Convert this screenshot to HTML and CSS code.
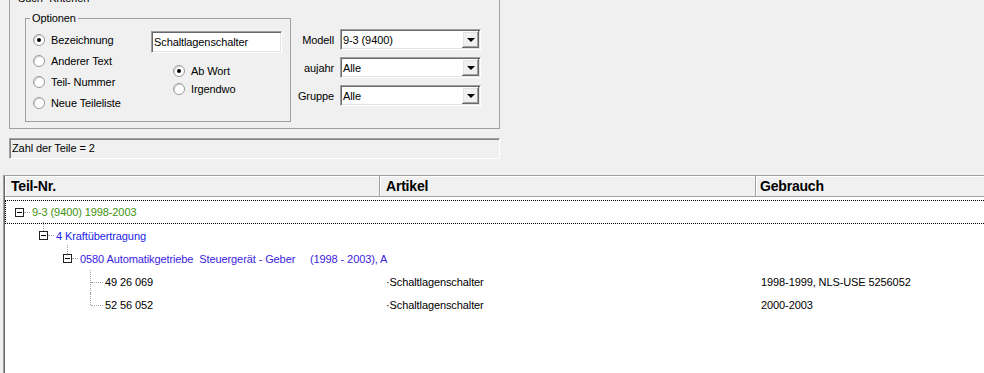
FILE: index.html
```html
<!DOCTYPE html>
<html lang="de">
<head>
    <meta charset="UTF-8">
    <meta name="viewport" content="width=device-width, initial-scale=1.0">
    <title>Teilesuche</title>
    <link rel="stylesheet" href="styles.css">
</head>
<body>

    <fieldset class="searchBox">
        <legend>Such- Kriterien</legend>
        <div class="searchRow">
            <fieldset class="optionBox">
                <legend>Optionen</legend>
                <div class="optionCols">
                    <div class="radioList">
                        <div class="radio"><span class="dot checked"></span>Bezeichnung</div>
                        <div class="radio"><span class="dot"></span>Anderer Text</div>
                        <div class="radio"><span class="dot"></span>Teil- Nummer</div>
                        <div class="radio"><span class="dot"></span>Neue Teileliste</div>
                    </div>
                    <div class="searchCol">
                        <div class="textBox">Schaltlagenschalter</div>
                        <div class="subRadios">
                            <div class="radio"><span class="dot checked"></span>Ab Wort</div>
                            <div class="radio"><span class="dot"></span>Irgendwo</div>
                        </div>
                    </div>
                </div>
            </fieldset>

            <div class="filterGrid">
                <span class="filterLabel">Modell</span>
                <div class="combo"><span>9-3 (9400)</span><span class="comboBtn"></span></div>
                <span class="filterLabel">aujahr</span>
                <div class="combo"><span>Alle</span><span class="comboBtn"></span></div>
                <span class="filterLabel">Gruppe</span>
                <div class="combo"><span>Alle</span><span class="comboBtn"></span></div>
            </div>
        </div>
    </fieldset>

    <div class="statusBox">Zahl der Teile = 2</div>

    <div class="partList">
        <div class="listInner">
            <div class="listHead">
                <div class="headCell">Teil-Nr.</div>
                <div class="headCell">Artikel</div>
                <div class="headCell">Gebrauch</div>
            </div>
            <div class="listBody">
                <div class="listRow first focused">
                    <div class="treeCell level0"><span class="toggle"></span><span class="link"></span><span class="model">9-3 (9400) 1998-2003</span></div>
                    <div class="cell"></div>
                    <div class="cell"></div>
                </div>
                <div class="listRow">
                    <div class="treeCell level1"><span class="toggle child"></span><span class="link"></span><span class="group">4 Kraftübertragung</span></div>
                    <div class="cell"></div>
                    <div class="cell"></div>
                </div>
                <div class="listRow">
                    <div class="treeCell level2"><span class="toggle child"></span><span class="link"></span><span class="subGroup">0580 Automatikgetriebe  Steuergerät - Geber     (1998 - 2003), A</span></div>
                    <div class="cell"></div>
                    <div class="cell"></div>
                </div>
                <div class="listRow">
                    <div class="treeCell leaf"><span class="elbow"></span><span>49 26 069</span></div>
                    <div class="cell">·Schaltlagenschalter</div>
                    <div class="cell usage">1998-1999, NLS-USE 5256052</div>
                </div>
                <div class="listRow">
                    <div class="treeCell leaf"><span class="elbow last"></span><span>52 56 052</span></div>
                    <div class="cell">·Schaltlagenschalter</div>
                    <div class="cell usage">2000-2003</div>
                </div>
            </div>
        </div>
    </div>

</body>
</html>
```

FILE: styles.css
```css
body {
    margin: 0;
    background: #f0f0f0;
    font-family: "Liberation Sans", Arial, sans-serif;
    font-size: 11px;
    letter-spacing: -0.1px;
    color: #000;
    height: 373px;
    overflow: hidden;
}

fieldset {
    box-sizing: border-box;
    border: 1px solid #a0a0a0;
    margin: 0;
    min-width: 0;
}
legend {
    padding: 0 2px;
    line-height: 13px;
}

/* Such-Kriterien */
.searchBox {
    width: 491px;
    height: 137px;
    margin: -8px 0 0 9px;
    padding: 7px 6px 5px 15px;
}
.searchBox > legend {
    margin-left: -9px;
}
.searchRow {
    display: flex;
    align-items: flex-start;
}

.optionBox {
    width: 266px;
    height: 110px;
    padding: 4px 7px 0 7px;
}
.optionBox > legend {
    margin-left: -3px;
}
.optionCols {
    display: flex;
}
.radioList {
    width: 118px;
    display: flex;
    flex-direction: column;
}
.radio {
    height: 21px;
    display: flex;
    align-items: center;
    gap: 6px;
    white-space: nowrap;
}
.dot {
    width: 12px;
    height: 12px;
    box-sizing: border-box;
    border-radius: 50%;
    background: #fff;
    border: 1px solid #9a9a9a;
    box-shadow: inset 1px 1px 0 #d4d4d4;
    display: flex;
    align-items: center;
    justify-content: center;
}
.dot.checked::after {
    content: "";
    width: 4px;
    height: 4px;
    border-radius: 50%;
    background: #000;
}

.searchCol {
    display: flex;
    flex-direction: column;
}
.textBox,
.combo {
    box-sizing: border-box;
    background: #fff;
    border: 1px solid;
    border-color: #a0a0a0 #fff #fff #a0a0a0;
    box-shadow: inset 1px 1px 0 #696969, inset -1px -1px 0 #e3e3e3;
}
.textBox {
    width: 131px;
    height: 22px;
    margin-top: 2px;
    padding-left: 2px;
    line-height: 20px;
}
.subRadios {
    margin: 9px 0 0 22px;
}
.subRadios .radio {
    height: 18px;
}

.filterGrid {
    display: grid;
    grid-template-columns: 40px 141px;
    column-gap: 6px;
    row-gap: 7px;
    align-items: center;
    margin: 17px 0 0 3px;
}
.filterLabel {
    text-align: right;
}
.combo {
    height: 21px;
    padding-left: 2px;
    display: flex;
    align-items: center;
    justify-content: space-between;
}
.comboBtn {
    width: 17px;
    height: 17px;
    margin-right: 1px;
    background: #f0f0f0;
    box-shadow: inset -1px -1px 0 #696969, inset 1px 1px 0 #fff, inset -2px -2px 0 #a0a0a0, inset 2px 2px 0 #e3e3e3;
    display: flex;
    align-items: center;
    justify-content: center;
}
.comboBtn::after {
    content: "";
    border-left: 4px solid transparent;
    border-right: 4px solid transparent;
    border-top: 4px solid #000;
    margin-top: 1px;
}

/* Zahl der Teile */
.statusBox {
    box-sizing: border-box;
    width: 491px;
    height: 21px;
    margin: 9px 0 0 9px;
    padding-left: 2px;
    line-height: 19px;
    border: 1px solid;
    border-color: #a0a0a0 #fff #fff #a0a0a0;
    box-shadow: inset 1px 1px 0 #828282;
}

/* Teileliste */
.partList {
    margin: 16px -20px 0 3px;
    height: 198px;
    background: #fff;
    border-top: 1px solid #a0a0a0;
    border-left: 1px solid #a0a0a0;
}
.listInner {
    border-left: 1px solid #696969;
    height: 100%;
}
.listHead {
    display: grid;
    grid-template-columns: 375px 376px 1fr;
    background: #f0f0f0;
}
.headCell {
    height: 20px;
    line-height: 20px;
    padding-left: 6px;
    font-size: 14px;
    font-weight: bold;
    letter-spacing: -0.2px;
    border-right: 1px solid #a0a0a0;
    border-bottom: 1px solid #a0a0a0;
    box-shadow: inset 1px 1px 0 #fff;
}
.headCell:last-child {
    padding-left: 4px;
}

.listBody {
    padding-top: 3px;
}
.listRow {
    display: grid;
    grid-template-columns: 375px 376px 1fr;
    height: 23px;
    align-items: center;
    white-space: pre;
}
.listRow.first {
    height: 24px;
}
.listRow.focused {
    outline: 1px dotted #000;
    outline-offset: -1px;
}
.cell {
    padding-left: 6px;
}
.cell.usage {
    padding-left: 5px;
}

.treeCell {
    display: flex;
    align-items: center;
    height: 100%;
}
.treeCell > span {
    flex-shrink: 0;
}
.level0 { padding-left: 10px; }
.level1 { padding-left: 34px; }
.level2 { padding-left: 58px; }
.leaf { padding-left: 85px; }

.toggle {
    position: relative;
    width: 9px;
    height: 9px;
    box-sizing: border-box;
    border: 1px solid #222;
    background: #fff;
    display: flex;
    align-items: center;
    justify-content: center;
}
.toggle::after {
    content: "";
    width: 5px;
    height: 1px;
    background: #000;
}
.toggle.child::before {
    content: "";
    position: absolute;
    left: 3px;
    bottom: 8px;
    height: 9px;
    border-left: 1px dotted #a0a0a0;
}
.link {
    width: 6px;
    margin-right: 2px;
    border-top: 1px dotted #a0a0a0;
}

.elbow {
    position: relative;
    width: 13px;
    height: 100%;
    margin-right: 2px;
}
.elbow::before {
    content: "";
    position: absolute;
    left: 0;
    top: 0;
    bottom: 0;
    border-left: 1px dotted #a0a0a0;
}
.elbow.last::before {
    bottom: 50%;
}
.elbow::after {
    content: "";
    position: absolute;
    left: 1px;
    right: 0;
    top: 50%;
    border-top: 1px dotted #a0a0a0;
}

.model { color: #3f9212; }
.group { color: #2323e8; }
.subGroup { color: #3a22e0; }
```
